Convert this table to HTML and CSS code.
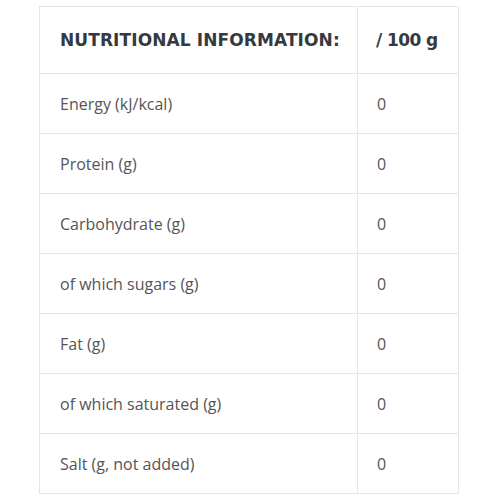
FILE: index.html
```html
<!DOCTYPE html>
<html lang="en">
<head>
<meta charset="utf-8">
<link rel="stylesheet" href="styles.css">
</head>
<body>
<div class="wrap">
<table class="nutri">
  <thead>
    <tr><th class="c1">NUTRITIONAL INFORMATION:</th><th class="c2">/ 100 g</th></tr>
  </thead>
  <tbody>
    <tr><td>Energy (kJ/kcal)</td><td>0</td></tr>
    <tr><td>Protein (g)</td><td>0</td></tr>
    <tr><td>Carbohydrate (g)</td><td>0</td></tr>
    <tr><td>of which sugars (g)</td><td>0</td></tr>
    <tr><td>Fat (g)</td><td>0</td></tr>
    <tr><td>of which saturated (g)</td><td>0</td></tr>
    <tr><td>Salt (g, not added)</td><td>0</td></tr>
  </tbody>
</table>
</div>
</body>
</html>
```
FILE: styles.css
```css
html, body { margin: 0; padding: 0; background: #fff; }
.wrap { padding: 6px 0 0 39px; }
.nutri {
  border-collapse: collapse;
  table-layout: fixed;
  width: 420px;
  font-family: "Open Sans", "Noto Sans", sans-serif;
}
.nutri th, .nutri td {
  border: 1px solid #e6e6e6;
  text-align: left;
  padding: 0 0 0 20px;
  vertical-align: middle;
  white-space: nowrap;
}
.nutri td + td { padding-left: 19px; }
.nutri th {
  height: 66px;
  font-family: "DejaVu Sans", "Liberation Sans", sans-serif;
  font-weight: 700;
  font-size: 17px;
  letter-spacing: 0.1px;
  color: #353a40;
}
.nutri .c2 { letter-spacing: -0.6px; padding-left: 18px; }
.nutri td {
  height: 59px;
  font-size: 16px;
  color: #555;
}
.nutri .c1 { width: 297px; }
```
